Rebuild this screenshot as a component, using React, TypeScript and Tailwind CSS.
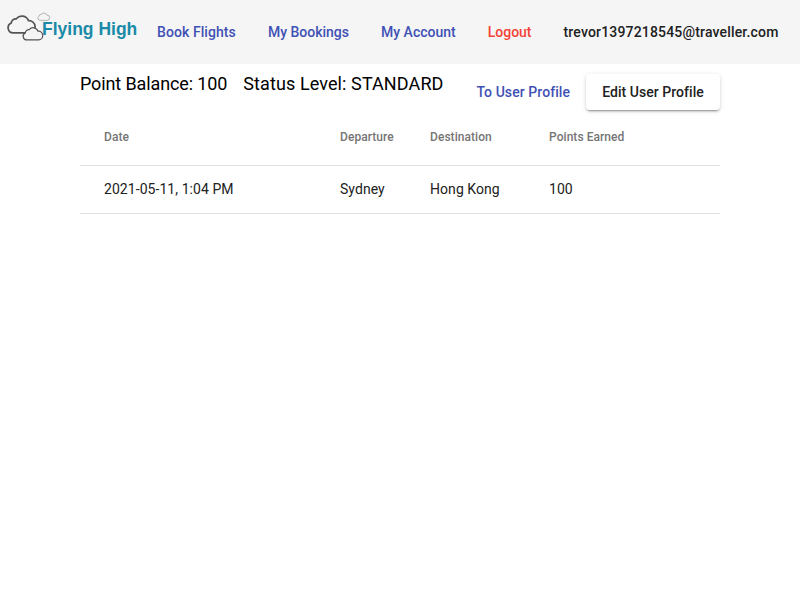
import React from "react";

const navLinks = [
  { label: "Book Flights", color: "text-[#3f51b5] tracking-[0.08px]" },
  { label: "My Bookings", color: "text-[#3f51b5]" },
  { label: "My Account", color: "text-[#3f51b5]" },
  { label: "Logout", color: "text-[#f44336]" },
  { label: "trevor1397218545@traveller.com", color: "text-[#212121] tracking-[0.17px]" },
];

const headers = ["Date", "Departure", "Destination", "Points Earned"];
const row = ["2021-05-11, 1:04 PM", "Sydney", "Hong Kong", "100"];

// Cloud outline used three times in the logo
const Cloud = ({ className, stroke = "#555" }: { className: string; stroke?: string }) => (
  <svg className={className} viewBox="0 0 32 22" fill="#f5f5f5" stroke={stroke} strokeWidth="1.800">
    <path d="M8 20.500A5.500 5.500 0 0 1 5.500 10A5 5 0 0 1 11 5.500A7.500 7.500 0 0 1 24 7.500A6.500 6.500 0 0 1 25 20.500Z" />
  </svg>
);

const Logo = () => (
  <div className="relative w-[141px] h-[64px] shrink-0">
    <Cloud className="absolute left-[6px] top-[13px] w-[30px] h-[22px]" />
    <Cloud className="absolute left-[21px] top-[26px] w-[23px] h-[15px]" />
    <Cloud className="absolute left-[37px] top-[12px] w-[13px] h-[9px]" stroke="#999" />
    <span className="absolute left-[42px] top-[18px] whitespace-nowrap font-['Liberation_Sans',sans-serif] font-bold text-[17.5px] leading-[22px] text-[#1a8aa8]">
      Flying High
    </span>
  </div>
);

export default function App() {
  return (
    <div className="min-h-[600px] bg-white font-['Roboto',sans-serif]">
      <nav className="flex items-center h-[64px] bg-[#f5f5f5]">
        <Logo />
        {navLinks.map((link) => (
          <a key={link.label} className={`px-4 whitespace-nowrap text-sm font-medium ${link.color}`}>
            {link.label}
          </a>
        ))}
      </nav>

      <main className="px-20">
        <div className="flex justify-between h-[46px]">
          <div className="flex gap-4 pt-[9px] text-lg leading-[22px] text-black">
            <span className="tracking-[-0.12px]">Point Balance: 100</span>
            <span className="tracking-[0.1px]">Status Level: STANDARD</span>
          </div>
          <div className="flex items-center pt-[10px]">
            <a className="px-4 whitespace-nowrap text-sm font-medium tracking-[0.07px] text-[#3f51b5]">To User Profile</a>
            <button className="h-[36px] w-[134px] rounded bg-white whitespace-nowrap text-sm font-medium tracking-[0.04px] text-[#212121] shadow-[0_3px_1px_-2px_rgba(0,0,0,0.2),0_2px_2px_0_rgba(0,0,0,0.14),0_1px_5px_0_rgba(0,0,0,0.12)]">
              Edit User Profile
            </button>
          </div>
        </div>

        <div className="grid grid-cols-[236px_90px_119px_1fr] pl-6 pb-[2px] h-[56px] items-center border-b border-[#e0e0e0] text-xs font-medium tracking-[0.06px] text-[#757575]">
          {headers.map((h) => (
            <div key={h}>{h}</div>
          ))}
        </div>
        <div className="grid grid-cols-[236px_90px_119px_1fr] pl-6 pb-[2px] h-[48px] items-center border-b border-[#e0e0e0] text-sm tracking-[0.06px] text-[#212121]">
          {row.map((c) => (
            <div key={c}>{c}</div>
          ))}
        </div>
      </main>
    </div>
  );
}
